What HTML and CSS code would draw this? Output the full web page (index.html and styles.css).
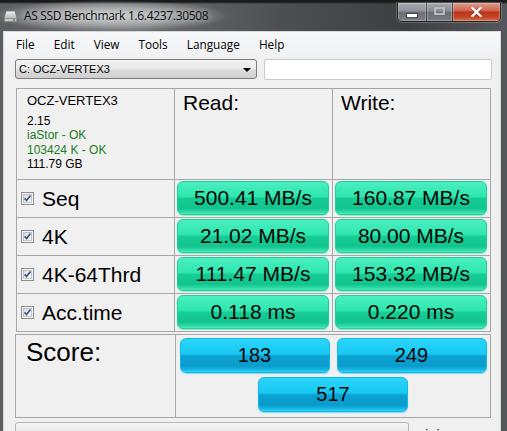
FILE: index.html
```html
<!DOCTYPE html>
<html>
<head>
<meta charset="utf-8">
<link rel="stylesheet" href="styles.css">
</head>
<body>
<div class="window">
  <div class="titlebar">
    <svg class="app-icon" width="15" height="15" viewBox="0 0 15 15">
      <defs>
        <linearGradient id="ig" x1="0" y1="0" x2="0" y2="1">
          <stop offset="0" stop-color="#f4f4f4"/>
          <stop offset="1" stop-color="#9a9a9a"/>
        </linearGradient>
      </defs>
      <path d="M3 2 H12 L14 9 V13 H1 V9 Z" fill="url(#ig)" stroke="#6a6a6a" stroke-width="0.8"/>
      <rect x="1.5" y="9.5" width="12" height="3" fill="#c8c8c8" stroke="#7a7a7a" stroke-width="0.6"/>
      <rect x="10" y="10.5" width="2" height="1" fill="#555"/>
    </svg>
    <span class="title">AS SSD Benchmark 1.6.4237.30508</span>
    <div class="caption-btns">
      <div class="cbtn min"><span class="min-glyph"></span></div>
      <div class="cbtn max"><span class="max-glyph"></span></div>
      <div class="cbtn close">
        <svg width="11" height="10" viewBox="0 0 11 10">
          <path d="M1.5 1 L9.5 9 M9.5 1 L1.5 9" stroke="#3a0a00" stroke-width="3.6" stroke-linecap="square" opacity="0.35"/>
          <path d="M1.5 1 L9.5 9 M9.5 1 L1.5 9" stroke="#ffffff" stroke-width="2.4" stroke-linecap="square"/>
        </svg>
      </div>
    </div>
  </div>
  <div class="client">
    <div class="menubar">
      <span class="menu-item">File</span>
      <span class="menu-item">Edit</span>
      <span class="menu-item">View</span>
      <span class="menu-item">Tools</span>
      <span class="menu-item">Language</span>
      <span class="menu-item">Help</span>
    </div>
    <div class="toolbar">
      <div class="combo"><span>C: OCZ-VERTEX3</span><span class="arrow"></span></div>
      <div class="textbox"></div>
    </div>
    <div class="results">
      <div class="cell info">
        <div class="drive-name">OCZ-VERTEX3</div>
        <div class="info-line">2.15</div>
        <div class="info-line ok">iaStor - OK</div>
        <div class="info-line ok">103424 K - OK</div>
        <div class="info-line">111.79 GB</div>
      </div>
      <div class="cell head">Read:</div>
      <div class="cell head">Write:</div>

      <div class="cell label"><svg class="check" width="13" height="13" viewBox="0 0 13 13"><defs><linearGradient id="cg" x1="0" y1="0" x2="1" y2="1"><stop offset="0" stop-color="#d8d8d8"/><stop offset="1" stop-color="#ffffff"/></linearGradient></defs><rect x="0.5" y="0.5" width="12" height="12" fill="#f4f4f4" stroke="#8f8f8f"/><rect x="2.5" y="2.5" width="8" height="8" fill="url(#cg)" stroke="#b8b8b8" stroke-width="0.8"/><path d="M3.6 6.4 L5.6 8.6 L9.4 3.6" fill="none" stroke="#3b4f8e" stroke-width="1.6"/></svg><span>Seq</span></div>
      <div class="cell val"><div class="gbtn">500.41 MB/s</div></div>
      <div class="cell val"><div class="gbtn">160.87 MB/s</div></div>

      <div class="cell label"><svg class="check" width="13" height="13" viewBox="0 0 13 13"><rect x="0.5" y="0.5" width="12" height="12" fill="#f4f4f4" stroke="#8f8f8f"/><rect x="2.5" y="2.5" width="8" height="8" fill="url(#cg)" stroke="#b8b8b8" stroke-width="0.8"/><path d="M3.6 6.4 L5.6 8.6 L9.4 3.6" fill="none" stroke="#3b4f8e" stroke-width="1.6"/></svg><span>4K</span></div>
      <div class="cell val"><div class="gbtn">21.02 MB/s</div></div>
      <div class="cell val"><div class="gbtn">80.00 MB/s</div></div>

      <div class="cell label"><svg class="check" width="13" height="13" viewBox="0 0 13 13"><rect x="0.5" y="0.5" width="12" height="12" fill="#f4f4f4" stroke="#8f8f8f"/><rect x="2.5" y="2.5" width="8" height="8" fill="url(#cg)" stroke="#b8b8b8" stroke-width="0.8"/><path d="M3.6 6.4 L5.6 8.6 L9.4 3.6" fill="none" stroke="#3b4f8e" stroke-width="1.6"/></svg><span>4K-64Thrd</span></div>
      <div class="cell val"><div class="gbtn">111.47 MB/s</div></div>
      <div class="cell val"><div class="gbtn">153.32 MB/s</div></div>

      <div class="cell label"><svg class="check" width="13" height="13" viewBox="0 0 13 13"><rect x="0.5" y="0.5" width="12" height="12" fill="#f4f4f4" stroke="#8f8f8f"/><rect x="2.5" y="2.5" width="8" height="8" fill="url(#cg)" stroke="#b8b8b8" stroke-width="0.8"/><path d="M3.6 6.4 L5.6 8.6 L9.4 3.6" fill="none" stroke="#3b4f8e" stroke-width="1.6"/></svg><span>Acc.time</span></div>
      <div class="cell val"><div class="gbtn">0.118 ms</div></div>
      <div class="cell val"><div class="gbtn">0.220 ms</div></div>
    </div>
    <div class="score">
      <div class="cell score-label">Score:</div>
      <div class="cell score-vals">
        <div class="bbtn">183</div>
        <div class="bbtn">249</div>
        <div class="bbtn">517</div>
      </div>
    </div>
    <div class="statusrow">
      <div class="progress"></div>
      <span class="time">-:--:--</span>
    </div>
  </div>
</div>
</body>
</html>
```

FILE: styles.css
```css
html, body {
  margin: 0;
  padding: 0;
}
body {
  width: 507px;
  height: 431px;
  overflow: hidden;
  background: #2a2a2a;
  font-family: "Liberation Sans", Arial, sans-serif;
}
.window {
  width: 507px;
  height: 431px;
  display: flex;
  flex-direction: column;
  overflow: hidden;
  background:
    linear-gradient(to bottom, #1a1a1a 0px, #1a1a1a 2px, transparent 4px),
    linear-gradient(to right, #5b5d60 0%, #6e7073 25%, #4d4f52 55%, #3d3f42 80%, #55575a 100%);
}
.titlebar {
  flex: none;
  height: 31px;
  display: flex;
  align-items: flex-start;
  padding-left: 3px;
  background:
    radial-gradient(ellipse 120px 16px at 110px 16px, rgba(225,225,225,0.85) 0%, rgba(200,200,200,0.6) 55%, rgba(160,160,160,0) 100%);
}
.app-icon {
  margin-top: 9px;
}
.title {
  margin-top: 7px;
  margin-left: 6px;
  font-family: "Open Sans", "Noto Sans", sans-serif;
  font-size: 12px;
  line-height: 18px;
  color: #0a0a0a;
  text-shadow: 0 0 6px rgba(255,255,255,0.7);
  letter-spacing: -0.32px;
}
.caption-btns {
  margin-left: auto;
  margin-top: 3px;
  margin-right: 6px;
  display: flex;
  height: 18px;
  border: 1px solid rgba(20,20,20,0.75);
  border-top: none;
  border-radius: 0 0 5px 5px;
  overflow: hidden;
  box-shadow: 0 0 0 1px rgba(255,255,255,0.2);
}
.cbtn {
  display: flex;
  align-items: center;
  justify-content: center;
  height: 18px;
  box-shadow: inset 0 0 0 1px rgba(255,255,255,0.25);
}
.cbtn.min {
  width: 28px;
  background: linear-gradient(to bottom, #a9adb2 0%, #8d9197 45%, #6c7076 52%, #7c8086 100%);
  border-right: 1px solid rgba(30,30,30,0.6);
}
.cbtn.max {
  width: 25px;
  background: linear-gradient(to bottom, #a5a9ae 0%, #898d93 45%, #6a6e74 52%, #787c82 100%);
  border-right: 1px solid rgba(30,30,30,0.6);
}
.cbtn.close {
  width: 47px;
  background: linear-gradient(to bottom, #df9c8a 0%, #d06a52 40%, #bb3519 52%, #c4452a 78%, #d96f50 100%);
}
.min-glyph {
  width: 10px;
  height: 3px;
  margin-top: 6px;
  background: #ffffff;
  box-shadow: 0 0 1px 1px rgba(0,0,0,0.35);
}
.max-glyph {
  width: 7px;
  height: 4px;
  margin-top: -2px;
  border: 2px solid #b9bcc0;
  box-shadow: 0 0 1px rgba(0,0,0,0.3);
}

.client {
  flex: 1;
  min-height: 0;
  margin-left: 3px;
  margin-right: 6px;
  background: #f0f0f0;
  border: 1px solid #d8d8d8;
  border-bottom: none;
  display: flex;
  flex-direction: column;
  overflow: hidden;
}
.client > * {
  flex: none;
}
.menubar {
  height: 24px;
  display: flex;
  align-items: center;
  gap: 19px;
  padding-left: 12px;
  background: linear-gradient(to bottom, #f7f8f9, #f0f1f3);
  font-family: "Open Sans", "Noto Sans", sans-serif;
  font-size: 11.8px;
  color: #000;
}
.toolbar {
  display: flex;
  align-items: flex-start;
  padding-top: 3px;
  padding-left: 11px;
  box-sizing: border-box;
  height: 32px;
}
.combo {
  width: 237px;
  height: 18px;
  border: 1px solid #7a7a7a;
  border-radius: 3px;
  background: linear-gradient(to bottom, #f2f2f2 0%, #ebebeb 50%, #dddddd 51%, #cfcfcf 100%);
  display: flex;
  align-items: center;
  justify-content: space-between;
  padding-left: 3px;
  font-size: 11px;
  color: #000;
}
.combo .arrow {
  width: 0;
  height: 0;
  border-left: 4px solid transparent;
  border-right: 4px solid transparent;
  border-top: 4px solid #000;
  margin-right: 5px;
  margin-top: 1px;
}
.textbox {
  margin-left: 7px;
  width: 226px;
  height: 19px;
  background: #ffffff;
  border: 1px solid #c6c8cc;
  border-radius: 2px;
}

.results {
  margin-left: 12px;
  display: grid;
  grid-template-columns: 157px 157px 157px;
  grid-template-rows: 90px 37px 37px 37px 37px;
  gap: 1px;
  background: #a7a7a7;
  border: 1px solid #a7a7a7;
  box-sizing: border-box;
  width: 475px;
}
.cell {
  background: #f0f0f0;
}
.info {
  padding: 4px 0 0 10px;
}
.drive-name {
  font-size: 13px;
  line-height: 16px;
  margin-bottom: 5px;
}
.info-line {
  font-size: 12px;
  line-height: 14.33px;
}
.ok {
  color: #1b7d1b;
}
.head {
  padding: 2px 0 0 8px;
  font-size: 21px;
  line-height: 24px;
}
.label {
  display: flex;
  align-items: center;
  gap: 8px;
  padding-left: 4px;
  font-size: 21px;
  line-height: 24px;
}
.check {
  flex: none;
}
.val {
  padding: 1px 3px 2px 2px;
}
.gbtn, .bbtn {
  height: 34px;
  border-radius: 6px;
  display: flex;
  align-items: center;
  justify-content: center;
  font-size: 21px;
  color: #050505;
  box-sizing: border-box;
}
.gbtn {
  border: 1px solid #1fcf98;
  background: linear-gradient(to bottom, #4aefc0 0%, #2fe6ae 45%, #16cc95 52%, #12c48d 82%, #2edba6 94%, #52ecc2 100%);
  box-shadow: 0 1px 1px rgba(60,220,170,0.5);
}
.score {
  margin-top: 2px;
  margin-left: 11px;
  display: grid;
  grid-template-columns: 159px 314px;
  grid-template-rows: 82px;
  gap: 1px;
  background: #a7a7a7;
  border: 1px solid #a7a7a7;
  width: 476px;
  box-sizing: border-box;
}
.score-label {
  padding: 2px 0 0 10px;
  font-size: 26px;
  line-height: 30px;
}
.score-vals {
  display: flex;
  flex-wrap: wrap;
  justify-content: center;
  align-content: flex-start;
  column-gap: 7px;
  row-gap: 4px;
  padding-top: 3px;
}
.bbtn {
  width: 150px;
  height: 35px;
  font-size: 20px;
  border: 1px solid #13b8e6;
  background: linear-gradient(to bottom, #2ad5fb 0%, #18c8f2 45%, #0ba2d2 52%, #0a9bcb 82%, #15b9e6 94%, #36d6fb 100%);
  box-shadow: 0 1px 1px rgba(30,190,240,0.5);
}
.statusrow {
  display: flex;
  align-items: flex-start;
  padding-left: 11px;
  margin-top: 4px;
}
.progress {
  width: 392px;
  height: 16px;
  border: 1px solid #b4b4b4;
  border-radius: 3px;
  background: linear-gradient(to bottom, #f3f3f3, #e2e2e2);
}
.time {
  margin-left: 12px;
  margin-top: 3px;
  font-size: 12px;
  line-height: 14px;
  color: #000;
}
```
